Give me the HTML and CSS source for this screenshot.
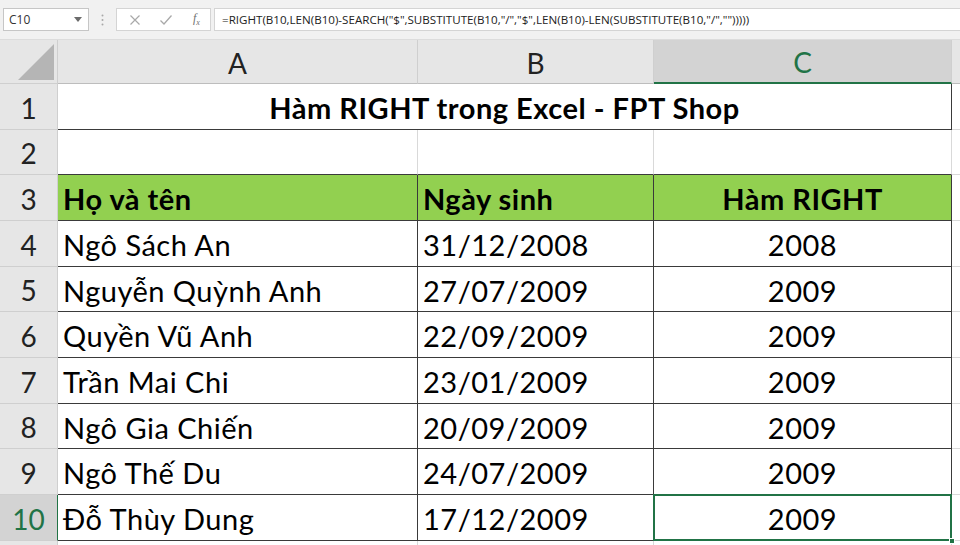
FILE: index.html
```html
<!DOCTYPE html>
<html>
<head>
<meta charset="utf-8">
<link rel="stylesheet" href="styles.css">
</head>
<body>
<div class="app">
  <div class="fbar">
    <div class="namebox"><span>C10</span><svg class="dd" width="8" height="5" viewBox="0 0 8 5"><path d="M0 0H8L4 5Z" fill="#6b6b6b"/></svg></div>
    <div class="dots"><svg width="3" height="12" viewBox="0 0 3 12"><circle cx="1.5" cy="1.5" r="1" fill="#a8a8a8"/><circle cx="1.5" cy="6" r="1" fill="#a8a8a8"/><circle cx="1.5" cy="10.5" r="1" fill="#a8a8a8"/></svg></div>
    <div class="btns">
      <svg class="ic" width="12" height="12" viewBox="0 0 12 12"><path d="M1.5 1.5L10.5 10.5M10.5 1.5L1.5 10.5" stroke="#a9a9a9" stroke-width="1.2"/></svg>
      <svg class="ic" width="14" height="12" viewBox="0 0 14 12"><path d="M1.5 6.5L5 10L12.5 1.5" stroke="#a9a9a9" stroke-width="1.3" fill="none"/></svg>
      <span class="fx">f<sub>x</sub></span>
    </div>
    <div class="formula">=RIGHT(B10,LEN(B10)-SEARCH("$",SUBSTITUTE(B10,"/","$",LEN(B10)-LEN(SUBSTITUTE(B10,"/","")))))</div>
  </div>
  <div class="sheet">
    <div class="corner"><svg width="36" height="36" viewBox="0 0 36 36"><path d="M36 0V36H0Z" fill="#b5b5b5"/></svg></div>
    <div class="ch">A</div>
    <div class="ch">B</div>
    <div class="ch sel">C</div>
    <div class="ch last"></div>

    <div class="rh">1</div>
    <div class="c title">Hàm RIGHT trong Excel - FPT Shop</div>
    <div class="c d"></div>

    <div class="rh">2</div>
    <div class="c r2"></div>
    <div class="c r2"></div>
    <div class="c r2 lc"></div>
    <div class="c d"></div>

    <div class="rh">3</div>
    <div class="c t g b">Họ và tên</div>
    <div class="c t g b">Ngày sinh</div>
    <div class="c t g b ctr">Hàm RIGHT</div>
    <div class="c d"></div>

    <div class="rh">4</div>
    <div class="c t">Ngô Sách An</div>
    <div class="c t">31/12/2008</div>
    <div class="c t ctr">2008</div>
    <div class="c d"></div>

    <div class="rh">5</div>
    <div class="c t">Nguyễn Quỳnh Anh</div>
    <div class="c t">27/07/2009</div>
    <div class="c t ctr">2009</div>
    <div class="c d"></div>

    <div class="rh">6</div>
    <div class="c t">Quyền Vũ Anh</div>
    <div class="c t">22/09/2009</div>
    <div class="c t ctr">2009</div>
    <div class="c d"></div>

    <div class="rh">7</div>
    <div class="c t">Trần Mai Chi</div>
    <div class="c t">23/01/2009</div>
    <div class="c t ctr">2009</div>
    <div class="c d"></div>

    <div class="rh">8</div>
    <div class="c t">Ngô Gia Chiến</div>
    <div class="c t">20/09/2009</div>
    <div class="c t ctr">2009</div>
    <div class="c d"></div>

    <div class="rh">9</div>
    <div class="c t">Ngô Thế Du</div>
    <div class="c t">24/07/2009</div>
    <div class="c t ctr">2009</div>
    <div class="c d"></div>

    <div class="rh selr">10</div>
    <div class="c t">Đỗ Thùy Dung</div>
    <div class="c t">17/12/2009</div>
    <div class="c t ctr active">2009<span class="selbox"></span><span class="handle"></span></div>
    <div class="c d"></div>

    <div class="rh"></div>
    <div class="c"></div>
    <div class="c"></div>
    <div class="c"></div>
    <div class="c d"></div>
  </div>
</div>
</body>
</html>
```

FILE: styles.css
```css
* { box-sizing: border-box; }
html, body { margin: 0; padding: 0; background: #ffffff; overflow: hidden; }
.app { width: 960px; height: 545px; overflow: hidden; font-family: "Lato", "Open Sans", sans-serif; }

.fbar {
  height: 40px;
  background: #f1f1f1;
  border-bottom: 1px solid #dcdcdc;
  display: flex;
  align-items: center;
  padding: 0 0 0 3px;
  font-family: "Open Sans", "Liberation Sans", sans-serif;
}
.namebox {
  width: 86px; height: 23px;
  background: #fff;
  border: 1px solid #c6c6c6;
  display: flex; align-items: center; justify-content: space-between;
  padding: 0 6px 0 5px;
  font-size: 12px; color: #333;
}
.dots { width: 27px; display: flex; justify-content: center; }
.btns {
  width: 95px; height: 23px;
  background: #fff;
  border: 1px solid #d4d4d4;
  display: flex; align-items: center;
  padding: 0 0 0 12px;
  gap: 18px;
}
.fx { font-family: "Liberation Serif", serif; font-style: italic; font-size: 12px; color: #707070; margin-left: 2px; }
.fx sub { font-size: 8px; }
.formula {
  flex: 1;
  margin-left: 3px;
  height: 23px;
  background: #fff;
  border: 1px solid #d4d4d4;
  border-right: none;
  display: flex; align-items: center;
  padding-left: 7px;
  font-size: 11.6px; color: #222;
  white-space: nowrap; overflow: hidden;
}

.sheet {
  display: grid;
  grid-template-columns: 58px 360px 236px 298px 1fr;
  grid-template-rows: 44px 46px 45px 46px 46px 45px 46px 46px 45px 46px 46px 10px;
  font-size: 29px;
  letter-spacing: 0.5px;
  color: #000;
}
.corner {
  background: #e6e6e6;
  border-right: 1px solid #cfcfcf;
  border-bottom: 1px solid #cfcfcf;
  display: flex; align-items: flex-end; justify-content: flex-end;
  padding: 0 3px 3px 0;
}
.ch {
  background: #e6e6e6;
  border-right: 1px solid #cfcfcf;
  border-bottom: 1px solid #bdbdbd;
  display: flex; align-items: center; justify-content: center;
  color: #222; font-size: 28px; letter-spacing: 0;
  padding-top: 2px;
}
.ch.sel { background: #d3d3d3; color: #217346; border-bottom: 2px solid #217346; }
.ch.last { border-right: none; }
.rh {
  background: #e6e6e6;
  border-right: 1px solid #cfcfcf;
  border-bottom: 1px solid #cfcfcf;
  display: flex; align-items: center; justify-content: center;
  color: #222; font-size: 28px; letter-spacing: 0;
  padding-top: 2px;
}
.rh.selr { background: #d3d3d3; color: #217346; border-right: 1px solid #217346; }

.c {
  border-right: 1px solid #d9d9d9;
  border-bottom: 1px solid #d9d9d9;
  display: flex; align-items: center;
  padding: 2px 0 0 5px;
  white-space: nowrap;
}
.c.d { border-right: none; }
.c.t { border-right-color: #3a3a3a; border-bottom-color: #3a3a3a; }
.c.title {
  grid-column: span 3;
  justify-content: center;
  font-weight: 700;
  border-right: 1px solid #3a3a3a;
  border-bottom: 1px solid #3a3a3a;
  padding-left: 0;
}
.c.r2 { border-bottom-color: #3a3a3a; }
.c.lc { border-right-color: #d9d9d9; }
.c.g { background: #92d050; }
.c.b { font-weight: 700; }
.c.ctr { justify-content: center; padding-left: 0; }
.c.active { position: relative; }
.selbox {
  position: absolute;
  left: -1px; top: -1px; right: -1px; bottom: -1px;
  border: 2px solid #217346;
}
.handle {
  position: absolute;
  right: -4px; bottom: -4px;
  width: 6px; height: 6px;
  background: #217346;
  border: 1px solid #fff;
}
```
